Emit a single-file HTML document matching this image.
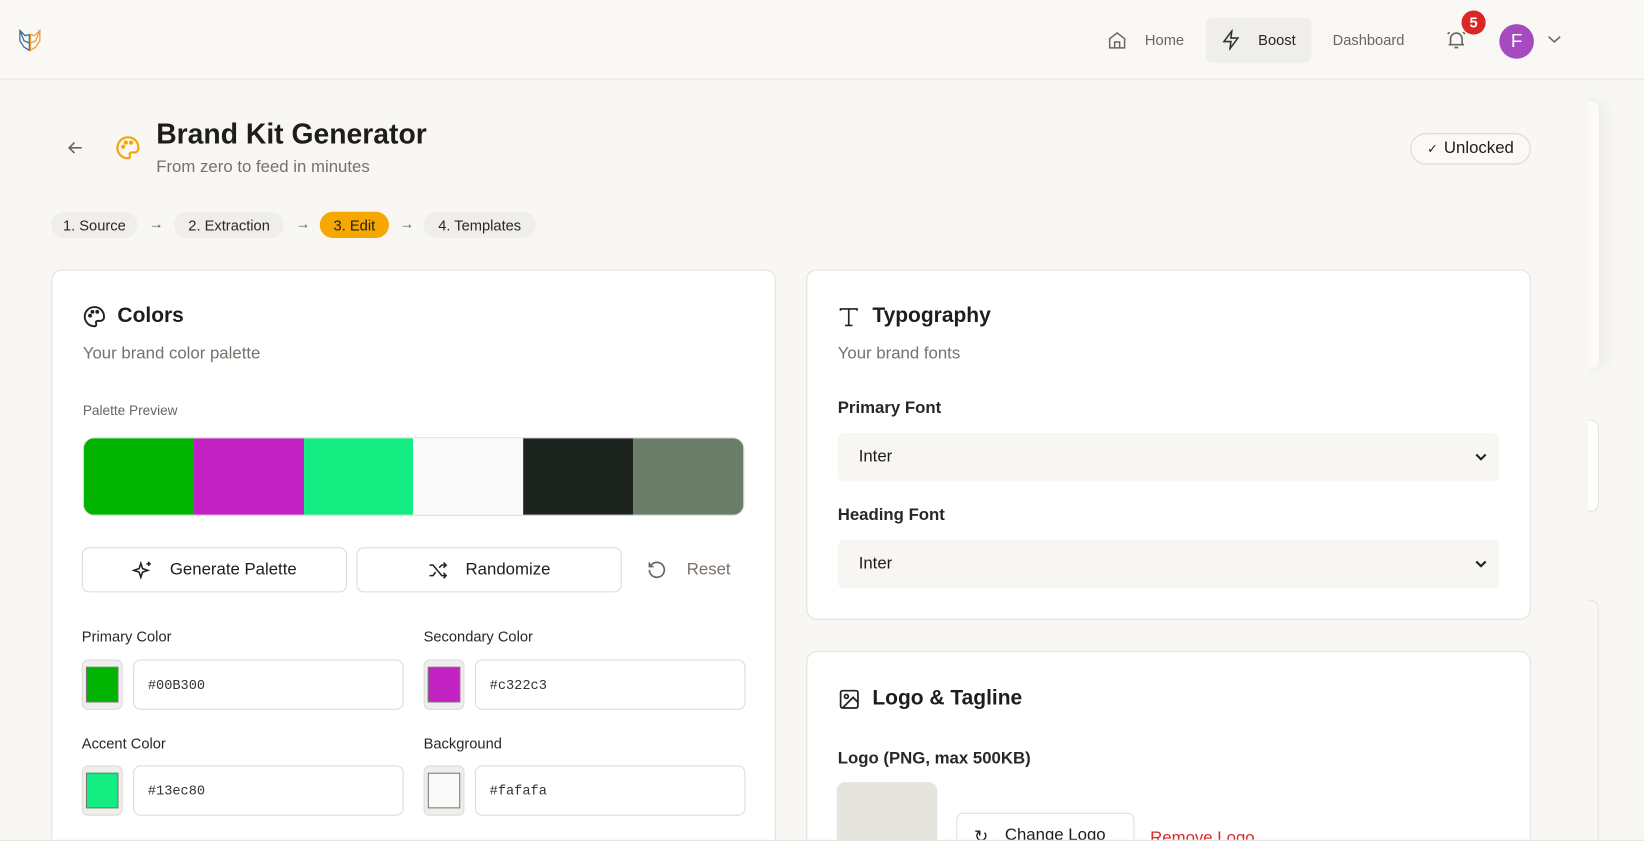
<!DOCTYPE html>
<html><head><meta charset="utf-8"><style>
*{box-sizing:border-box;margin:0;padding:0}
html,body{width:1644px;height:848px;overflow:hidden;background:#f8f7f4}
body{font-family:"Liberation Sans",sans-serif;color:#1f1d1a}
#w{position:absolute;left:0;top:0;width:1568px;height:809px;transform:scale(1.04847);transform-origin:0 0;overflow:hidden}
.a{position:absolute}
.card{position:absolute;background:#fff;border:1px solid #e3e0da;border-radius:10px}
.btn{position:absolute;background:#fff;border:1px solid #dedbd5;border-radius:7px;font-size:16px;display:flex;align-items:center;justify-content:center;gap:16px}
.lbl{position:absolute;font-size:14px;color:#2a2724}
.sw{position:absolute;width:39px;height:48px;border:1px solid #dedbd5;border-radius:6px;background:#efeeeb;padding:6px 3px}
.sw div{width:100%;height:100%;border:1px solid #777}
.inp{position:absolute;height:48px;border:1px solid #dedbd5;border-radius:7px;font-family:"Liberation Mono",monospace;font-size:13px;padding:0 0 0 13px;display:flex;align-items:center;color:#333}
.pill{position:absolute;top:202px;height:25px;border-radius:13px;background:#efeeeb;font-size:14px;display:flex;align-items:center;justify-content:center;color:#2a2724}
.arr{position:absolute;top:205px;font-size:14px;color:#555}
.sel{position:absolute;left:799px;width:631px;height:46px;background:#f7f6f3;border-radius:6px;font-size:16px;padding-left:20px;display:flex;align-items:center}
</style></head><body><div id="w">
<div class="a" style="left:0;top:0;width:1568px;height:76px;background:#f9f8f5;border-bottom:1px solid #e6e3de"></div>
<svg class="a" style="left:18px;top:27px" width="21" height="22" viewBox="0 0 21 22" fill="none" stroke-width="1.2"><path d="M1 2 L6 7 L10 6 L10 21 L5 18 L1 12 Z M1 2 L5 12 L10 14" stroke="#3d6b9a"/><path d="M20 2 L15 7 L11 6 L11 21 L16 18 L20 12 Z M20 2 L16 12 L11 14" stroke="#f29a3a"/></svg>
<svg class="a" style="left:1056px;top:29px" width="19" height="19" viewBox="0 0 24 24" fill="none" stroke="#6b6560" stroke-width="1.8"><path d="M3 10 L12 3 L21 10 V21 H3 Z M9 21 V14 H15 V21"/></svg>
<div class="a" style="left:1092px;top:30px;font-size:14px;color:#6b6560">Home</div>
<div class="a" style="left:1150px;top:17px;width:101px;height:43px;background:#efeeeb;border-radius:7px"></div>
<svg class="a" style="left:1164px;top:28px" width="20" height="20" viewBox="0 0 24 24" fill="none" stroke="#333" stroke-width="1.8"><path d="M13 2 L4 14 H12 L11 22 L20 10 H12 Z"/></svg>
<div class="a" style="left:1200px;top:30px;font-size:14px;color:#2a2724">Boost</div>
<div class="a" style="left:1271px;top:30px;font-size:14px;color:#6b6560">Dashboard</div>
<svg class="a" style="left:1378px;top:27px" width="22" height="22" viewBox="0 0 24 24" fill="none" stroke="#6b6560" stroke-width="1.7"><path d="M6 17 V11 a6 6 0 0 1 12 0 V17 H4 H20 M10 20 h4 M3 6 l2-2 M21 6 l-2-2"/></svg>
<div class="a" style="left:1394px;top:10px;width:23px;height:23px;border-radius:50%;background:#dc2626;color:#fff;font-size:14px;font-weight:bold;text-align:center;line-height:23px">5</div>
<div class="a" style="left:1430px;top:23px;width:33px;height:33px;border-radius:50%;background:#a64bbf;color:#fff;font-size:18px;text-align:center;line-height:33px">F</div>
<svg class="a" style="left:1476px;top:33px" width="13" height="10" viewBox="0 0 13 10" fill="none" stroke="#6b6560" stroke-width="1.5"><path d="M1 2 L6.5 7 L12 2"/></svg>
<div class="a" style="left:1500px;top:97px;width:25px;height:255px;background:#fdfbf6;border-radius:0 8px 8px 0;box-shadow:6px 0 14px rgba(0,0,0,0.05)"></div>
<div class="a" style="left:1500px;top:400px;width:25px;height:88px;background:#fff;border:1px solid #e3e0da;border-left:none;border-radius:0 8px 8px 0"></div>
<div class="a" style="left:1500px;top:572px;width:25px;height:230px;border:1px solid #e8e5df;border-left:none;border-bottom:none;border-radius:0 8px 0 0"></div>
<div class="a" style="left:0;top:77px;width:1515px;height:724px;background:#f8f7f4"></div>
<svg class="a" style="left:64px;top:133px" width="16" height="16" viewBox="0 0 16 16" fill="none" stroke="#6b6560" stroke-width="1.6"><path d="M14 8 H2 M7 3 L2 8 L7 13"/></svg>
<svg class="a" style="left:110px;top:129px" width="24" height="24" viewBox="0 0 24 24" fill="none" stroke="#f5a300" stroke-width="2"><path d="M12 2 a10 10 0 0 0 0 20 c1.5 0 2-1 2-2 c0-1.5-1-2 0-3 c1-1 2-.5 4-.5 a4 4 0 0 0 4-4.5 C22 6 17.5 2 12 2 Z"/><circle cx="7.5" cy="11" r="1" fill="#f5a300"/><circle cx="10" cy="7" r="1" fill="#f5a300"/><circle cx="15" cy="7" r="1" fill="#f5a300"/></svg>
<div class="a" style="left:149px;top:113px;font-size:27px;font-weight:bold">Brand Kit Generator</div>
<div class="a" style="left:149px;top:151px;font-size:16px;color:#7a7068">From zero to feed in minutes</div>
<div class="a" style="left:1345px;top:127px;width:115px;height:30px;border:1px solid #dcd8d2;border-radius:15px;font-size:16px;display:flex;align-items:center;justify-content:center;gap:6px;background:#faf9f7"><span style="font-size:12px">✓</span>Unlocked</div>
<div class="pill" style="left:49px;width:82px">1. Source</div>
<div class="arr" style="left:142px">→</div>
<div class="pill" style="left:166px;width:105px">2. Extraction</div>
<div class="arr" style="left:282px">→</div>
<div class="pill" style="left:305px;width:66px;background:#f7a800;color:#1f1d1a">3. Edit</div>
<div class="arr" style="left:381px">→</div>
<div class="pill" style="left:404px;width:107px">4. Templates</div>
<div class="card" style="left:49px;top:257px;width:691px;height:560px"></div>
<svg class="a" style="left:79px;top:291px" width="22" height="22" viewBox="0 0 24 24" fill="none" stroke="#222" stroke-width="2"><path d="M12 2 a10 10 0 0 0 0 20 c1.5 0 2-1 2-2 c0-1.5-1-2 0-3 c1-1 2-.5 4-.5 a4 4 0 0 0 4-4.5 C22 6 17.5 2 12 2 Z"/><circle cx="7.5" cy="11" r="1" fill="#222"/><circle cx="10" cy="7" r="1" fill="#222"/><circle cx="15" cy="7" r="1" fill="#222"/></svg>
<div class="a" style="left:112px;top:290px;font-size:20px;font-weight:bold">Colors</div>
<div class="a" style="left:79px;top:329px;font-size:16px;color:#7a7068">Your brand color palette</div>
<div class="a" style="left:79px;top:384px;font-size:13px;color:#6b6560">Palette Preview</div>
<div class="a" style="left:79px;top:417px;width:631px;height:75px;border-radius:11px;overflow:hidden;display:flex;border:1px solid #ddd"><div style="flex:1;background:#00b300"></div><div style="flex:1;background:#c322c3"></div><div style="flex:1;background:#13ec80"></div><div style="flex:1;background:#fafafa"></div><div style="flex:1;background:#1d231e"></div><div style="flex:1;background:#6a7d69"></div></div>
<div class="btn" style="left:78px;top:522px;width:253px;height:43px"><svg width="20" height="20" viewBox="0 0 24 24" fill="none" stroke="#222" stroke-width="1.8"><path d="M10 4 L12 10 L18 12 L12 14 L10 20 L8 14 L2 12 L8 10 Z M19 2 v5 M16.5 4.5 h5"/></svg>Generate Palette</div>
<div class="btn" style="left:340px;top:522px;width:253px;height:43px"><svg width="20" height="20" viewBox="0 0 24 24" fill="none" stroke="#222" stroke-width="1.8"><path d="M2 6 h4 l10 12 h5 M18 15 l3 3 -3 3 M2 18 h4 l3-4 M13 9 l3-3 h5 M18 3 l3 3 -3 3"/></svg>Randomize</div>
<svg class="a" style="left:617px;top:534px" width="19" height="19" viewBox="0 0 24 24" fill="none" stroke="#6b6560" stroke-width="2"><path d="M3 12 a9 9 0 1 0 3-6.7 L3 8 M3 3 v5 h5"/></svg>
<div class="a" style="left:655px;top:535px;font-size:16px;color:#7a7068">Reset</div>
<div class="lbl" style="left:78px;top:599px">Primary Color</div>
<div class="sw" style="left:78px;top:629px"><div style="background:#00b300"></div></div>
<div class="inp" style="left:127px;top:629px;width:258px">#00B300</div>
<div class="lbl" style="left:404px;top:599px">Secondary Color</div>
<div class="sw" style="left:404px;top:629px"><div style="background:#c322c3"></div></div>
<div class="inp" style="left:453px;top:629px;width:258px">#c322c3</div>
<div class="lbl" style="left:78px;top:701px">Accent Color</div>
<div class="sw" style="left:78px;top:730px"><div style="background:#13ec80"></div></div>
<div class="inp" style="left:127px;top:730px;width:258px">#13ec80</div>
<div class="lbl" style="left:404px;top:701px">Background</div>
<div class="sw" style="left:404px;top:730px"><div style="background:#fafafa"></div></div>
<div class="inp" style="left:453px;top:730px;width:258px">#fafafa</div>
<div class="card" style="left:769px;top:257px;width:691px;height:334px"></div>
<svg class="a" style="left:799px;top:292px" width="21" height="21" viewBox="0 0 24 24" fill="none" stroke="#222" stroke-width="1.8"><path d="M3 5 V3 H21 V5 M12 3 V21 M8 21 H16"/></svg>
<div class="a" style="left:832px;top:290px;font-size:20px;font-weight:bold">Typography</div>
<div class="a" style="left:799px;top:329px;font-size:16px;color:#7a7068">Your brand fonts</div>
<div class="a" style="left:799px;top:381px;font-size:16px;font-weight:bold;color:#2a2724">Primary Font</div>
<div class="sel" style="top:413px">Inter<svg class="a" style="right:12px;top:19px" width="11" height="8" viewBox="0 0 11 8" fill="none" stroke="#222" stroke-width="2"><path d="M1 1.5 L5.5 6 L10 1.5"/></svg></div>
<div class="a" style="left:799px;top:483px;font-size:16px;font-weight:bold;color:#2a2724">Heading Font</div>
<div class="sel" style="top:515px">Inter<svg class="a" style="right:12px;top:19px" width="11" height="8" viewBox="0 0 11 8" fill="none" stroke="#222" stroke-width="2"><path d="M1 1.5 L5.5 6 L10 1.5"/></svg></div>
<div class="card" style="left:769px;top:621px;width:691px;height:196px"></div>
<svg class="a" style="left:799px;top:656px" width="22" height="22" viewBox="0 0 24 24" fill="none" stroke="#222" stroke-width="1.8"><rect x="3" y="3" width="18" height="18" rx="2"/><circle cx="9" cy="9" r="2"/><path d="M21 15 L16 10 L5 21"/></svg>
<div class="a" style="left:832px;top:655px;font-size:20px;font-weight:bold">Logo &amp; Tagline</div>
<div class="a" style="left:799px;top:715px;font-size:16px;font-weight:bold;color:#2a2724">Logo (PNG, max 500KB)</div>
<div class="a" style="left:798px;top:746px;width:96px;height:64px;background:#e6e4df;border-radius:8px 8px 0 0"></div>
<div class="btn" style="left:912px;top:775px;width:170px;height:36px;border-bottom:none;border-radius:7px 7px 0 0;justify-content:flex-start;padding-left:16px;align-items:flex-start;padding-top:12px">↻ <span>Change Logo</span></div>
<div class="a" style="left:1097px;top:791px;font-size:16px;color:#dc2626;height:10px;overflow:hidden">Remove Logo</div>
<div class="a" style="left:0;top:801px;width:1568px;height:8px;background:#fff;border-top:1px solid #e3e0da"></div>
</div></body></html>
